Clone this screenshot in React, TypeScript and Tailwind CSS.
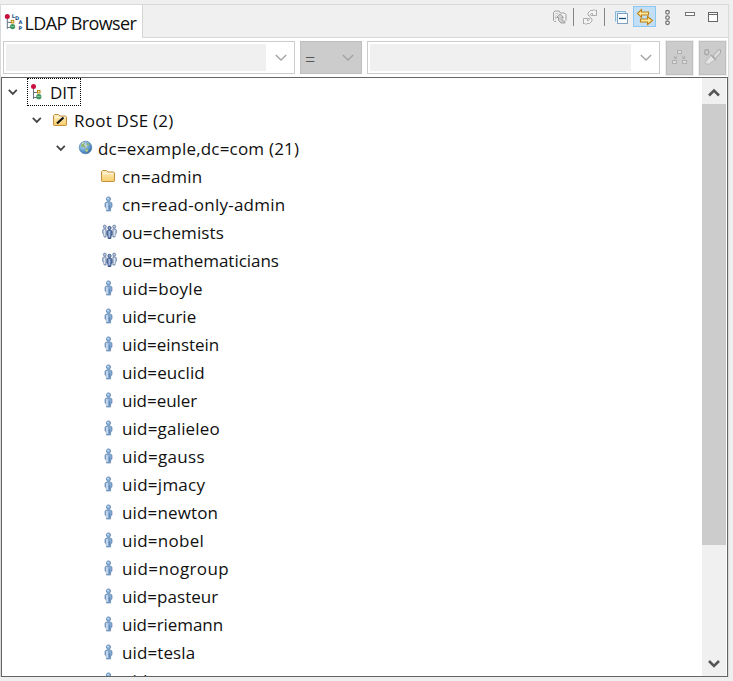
import React from "react";

type IconName = "dit" | "root" | "globe" | "folder" | "person" | "group";
type Row = { label: string; icon: IconName; level: number; track: string };

const rows: Row[] = [
  { label: "DIT", icon: "dit", level: 0, track: "tracking-[-0.1px]" },
  { label: "Root DSE (2)", icon: "root", level: 1, track: "tracking-[0.23px]" },
  { label: "dc=example,dc=com (21)", icon: "globe", level: 2, track: "tracking-[0.2px]" },
  { label: "cn=admin", icon: "folder", level: 3, track: "tracking-[0.22px]" },
  { label: "cn=read-only-admin", icon: "person", level: 3, track: "tracking-[0.22px]" },
  { label: "ou=chemists", icon: "group", level: 3, track: "tracking-[0.1px]" },
  { label: "ou=mathematicians", icon: "group", level: 3, track: "tracking-[-0.04px]" },
  { label: "uid=boyle", icon: "person", level: 3, track: "tracking-[0.33px]" },
  { label: "uid=curie", icon: "person", level: 3, track: "tracking-[0px]" },
  { label: "uid=einstein", icon: "person", level: 3, track: "tracking-[-0.03px]" },
  { label: "uid=euclid", icon: "person", level: 3, track: "tracking-[0.08px]" },
  { label: "uid=euler", icon: "person", level: 3, track: "tracking-[-0.05px]" },
  { label: "uid=galieleo", icon: "person", level: 3, track: "tracking-[0.19px]" },
  { label: "uid=gauss", icon: "person", level: 3, track: "tracking-[0.3px]" },
  { label: "uid=jmacy", icon: "person", level: 3, track: "tracking-[0.25px]" },
  { label: "uid=newton", icon: "person", level: 3, track: "tracking-[0.15px]" },
  { label: "uid=nobel", icon: "person", level: 3, track: "tracking-[0.25px]" },
  { label: "uid=nogroup", icon: "person", level: 3, track: "tracking-[0.4px]" },
  { label: "uid=pasteur", icon: "person", level: 3, track: "tracking-[0.05px]" },
  { label: "uid=riemann", icon: "person", level: 3, track: "tracking-[-0.05px]" },
  { label: "uid=tesla", icon: "person", level: 3, track: "tracking-[0.1px]" },
  { label: "uid=test", icon: "person", level: 3, track: "tracking-[0.1px]" },
];

const indents = ["pl-[4px]", "pl-[28px]", "pl-[52px]", "pl-[76px]"];

function TreeGlyph() {
  return (
    <g>
      <path d="M2.5 4v11M2.5 8.5h4M2.5 13.5h4" stroke="#66727f" fill="none" />
      <circle cx="2.5" cy="2.6" r="2.5" fill="#c8103f" />
      <rect x="6.5" y="6.5" width="2.5" height="2.5" fill="#fff3c4" stroke="#b8860b" />
      <circle cx="7.8" cy="12.7" r="2.6" fill="#3f9560" />
      <path d="M6 12.5h3.5" stroke="#7fc596" />
    </g>
  );
}

function NodeIcon({ name }: { name: IconName }) {
  const common = { width: 16, height: 16, viewBox: "0 0 16 16", fill: "none", className: "shrink-0 overflow-visible" };
  switch (name) {
    case "dit":
      return <svg {...common}><g transform="translate(2 0)"><TreeGlyph /></g></svg>;
    case "root":
    case "folder":
      return (
        <svg {...common}>
          <defs>
            <linearGradient id={"f-" + name} x1="0" y1="0" x2="0" y2="1">
              <stop stopColor="#fff0c4" /><stop offset="1" stopColor="#f9cd6b" />
            </linearGradient>
          </defs>
          <path d="M1.5 13V3.5l1-1h4l1.5 1.5h5.5l1 1V13l-.5.5h-12z" fill={`url(#f-${name})`} stroke="#c58f40" />
          <path d="M2.5 5.5h11" stroke="#fff7dc" />
          {name === "root" && <path d="M5 11.5 11.5 5.5" stroke="#111" strokeWidth="2.2" />}
        </svg>
      );
    case "globe":
      return (
        <svg {...common}>
          <defs>
            <radialGradient id="sea" cx=".35" cy=".3" r=".8">
              <stop stopColor="#d3eafa" /><stop offset=".55" stopColor="#65a2d8" /><stop offset="1" stopColor="#2a5c9b" />
            </radialGradient>
          </defs>
          <g transform="translate(1 0)">
            <circle cx="8.5" cy="7.5" r="6.3" fill="url(#sea)" stroke="#5382ae" strokeWidth=".7" />
            <path d="M4 5 6 2.8 8 3 7 5 9 6 8 8l-2-1-1.5.5zM9 8l2.5 1-1 2.5-1.5 1-1-2.5zM10.5 2.5l2.5 2.5-1.5 1-2-1.5z" fill="#8fb277" />
            <path d="m5 4 1.5-1M8 6.5l2-1M9 10l1.5 1" stroke="#f3e8b0" />
          </g>
        </svg>
      );
    case "person":
      return (
        <svg {...common}>
          <path d="M7 5.8h3l2 1.3v4l-1.2.3-.3 3.6h-4l-.3-3.6L5 11V7.1z" fill="#85aad3" stroke="#5f83ac" strokeWidth=".7" />
          <path d="M7 7v7" stroke="#e0edf9" strokeWidth="1.3" />
          <path d="M9.5 9v5" stroke="#5e86b5" />
          <circle cx="8.5" cy="3" r="2.1" fill="#8cb5df" stroke="#5a81ad" strokeWidth=".8" />
          <path d="M7.3 2.5h1.5" stroke="#d3e8fa" />
        </svg>
      );
    case "group":
      return (
        <svg {...common}>
          <g fill="#b9c8df" stroke="#62779f" strokeWidth=".8">
            <circle cx="4.8" cy="2.6" r="1.5" /><circle cx="14.2" cy="2.6" r="1.5" />
            <path d="M4 4.8 2.7 5.8v3.6l1.1.6.3 3h2V4.8zM15 4.8l1.3 1v3.6l-1.1.6-.3 3h-2V4.8z" />
          </g>
          <path d="M4.7 6v6M14.3 6v6" stroke="#eef4fb" strokeWidth=".8" />
          <path d="M8.5 6h2L12 7.2V11l-.9.3-.3 3.2H8.2l-.3-3.2L7 11V7.2z" fill="#6a86b8" stroke="#2c4878" strokeWidth=".9" />
          <path d="M9.2 7v6" stroke="#c6d6ef" strokeWidth=".9" />
          <circle cx="9.5" cy="3.9" r="1.6" fill="#8aa6d0" stroke="#2c487b" strokeWidth=".9" />
        </svg>
      );
  }
}

function Twisty() {
  return (
    <svg className="shrink-0" width="14" height="14" viewBox="0 0 14 14" fill="none">
      <path d="m2.8 4.9 4 4 4-4" stroke="#444" strokeWidth="1.8" />
    </svg>
  );
}

function Chevron() {
  return (
    <svg width="14" height="10" viewBox="0 0 14 10" fill="none">
      <path d="m1.8 2 5.2 5L12.2 2" stroke="#a3a3a3" strokeWidth="1.3" />
    </svg>
  );
}

function Field({ size }: { size: string }) {
  return (
    <div className={`flex h-[33px] shrink-0 border border-[#cccccc] bg-white p-[2px] ${size}`}>
      <div className="flex-1 bg-[#f0f0f0]" />
      <div className="flex w-[26px] items-center justify-center pl-[4px]"><Chevron /></div>
    </div>
  );
}

function Toolbar() {
  return (
    <svg className="shrink-0" width="186" height="32" viewBox="0 0 186 32" fill="none">
      {/* open folder with upward arrow */}
      <g stroke="#a0a0a0">
        <path d="M14 16.5h-1.5l-1-1v-8l1.5-1.5h4l1.5 2h4l1.5 1.5v6" />
        <path d="M13.5 8.5h3M13.5 14.5V11l1.5-1.5" stroke="#cccccc" />
        <path d="m18 9-3.5 3.5h2v3l2.5 2.5h4v-1.5l-3-1.5v-2.5h1.5z" fill="#d0d0d0" />
      </g>
      <path d="M31.5 3v18M62.5 3v18" stroke="#858585" />
      {/* refresh arrows */}
      <g stroke="#a3a3a3" fill="#f3f3f3" strokeWidth=".9" strokeLinejoin="round">
        <path id="refresh-arrow" d="M47.5 11.5l-1.5-1.5V8l2.5-2.5h2.5l1-1 1.5 1.5 1-1v5.500h-5l1.300-1.500-1-1-1.300 1.500z" />
        <path transform="rotate(180 48 12)" d="M47.500 11.500l-1.500-1.500V8l2.500-2.500h2.500l1-1 1.500 1.500 1-1v5.500h-5l1.300-1.500-1-1-1.300 1.500z" />
      </g>
      {/* collapse all */}
      <path d="M73.5 16.5v-10h10v2" fill="#d9effa" stroke="#85b8d9" />
      <rect x="75.5" y="8.5" width="10" height="10" fill="#fcffff" stroke="#7da0bf" />
      <path d="M77 13.5h7" stroke="#0b4a77" strokeWidth="1.3" />
      {/* link with editor */}
      <rect x="91.5" y="1.5" width="22" height="20" fill="#c2dff5" stroke="#8cc6f3" />
      <g fill="#ffe7a1" stroke="#bd8213" strokeWidth="1.1">
        <path d="m95.5 8.5 4-4V7h7v3h-7v2.5z" />
        <path d="M98.5 14h7v-2.5l5 4-5 4V17h-7z" />
      </g>
      <g stroke="#777" strokeWidth="1.3" fill="#fff">
        <circle cx="125.5" cy="7.3" r="1.8" /><circle cx="125.5" cy="12.6" r="1.8" /><circle cx="125.5" cy="17.8" r="1.8" />
      </g>
      <rect x="143.5" y="7.5" width="9" height="3" fill="#fff" stroke="#727272" />
      <rect x="166.5" y="7.5" width="9" height="9" fill="#fff" stroke="#656565" />
      <path d="M166 9.5h10" stroke="#656565" />
    </svg>
  );
}

export default function App() {
  return (
    <main className="h-[681px] w-[733px] overflow-hidden bg-[#efefef] pt-[4px] font-['Open_Sans','Noto_Sans',sans-serif] text-[#101010]">
      <section className="flex h-[673px] w-[729px] flex-col border border-b-0 border-[#dadada] bg-white">
        <header className="flex h-[33px] shrink-0">
          <div className="flex w-[142px] shrink-0 items-start border-r border-[#d5d5d5] bg-white pl-[4px]">
            <svg width="18" height="18" viewBox="0 0 18 18" fill="none" className="mt-[8px] mr-[1.5px] shrink-0 overflow-visible">
              <g transform="translate(-0.2 .9)"><TreeGlyph /></g>
              <g className="font-['DejaVu_Sans',sans-serif] text-[5px] font-bold" fill="#144f88">
                <text x="6.8" y="4.8">L</text><text x="10" y="7">D</text><text x="13.4" y="11.2">A</text><text x="13.4" y="16.8">P</text>
              </g>
            </svg>
            <h1 className="mt-[6px] text-[18px] leading-[24px] whitespace-nowrap tracking-[-0.62px]">LDAP Browser</h1>
          </div>
          <div className="flex flex-1 justify-end border-b border-[#d8d8d8] bg-[#f0f0f0]"><Toolbar /></div>
        </header>

        <div className="flex h-[39px] shrink-0 pl-[2px] pt-[3px]">
          <Field size="w-[292px]" />
          <div className="ml-[5px] flex h-[33px] w-[62px] shrink-0 items-center justify-between border border-[#bfbfbf] bg-[#cccccc] pr-[6px] pl-[4px]">
            <span className="pt-[4px] text-[18px] font-light text-[#555]">=</span><Chevron />
          </div>
          <div className="ml-[5px] flex"><Field size="w-[293px]" /></div>
          <div className="ml-[6px] flex h-[34px] w-[27px] items-center justify-center border border-[#c0c0c0] bg-[#cccccc] shadow-[0_0_0_1px_#eeeeee]">
            <svg width="17" height="18" viewBox="0 0 17 18" fill="none" stroke="#b0b0b0">
              <rect x="6.5" y="1.5" width="4" height="3" fill="#ddd" /><rect x="1.5" y="11.5" width="4" height="3" fill="#ddd" /><rect x="11.5" y="11.5" width="4" height="3" fill="#ddd" />
              <path d="m6.5 6.5-3 3M3.5 7v2.5H6M10.500 6.500l3 3M13.500 7v2.500H11" />
            </svg>
          </div>
          <div className="ml-[6px] flex h-[34px] w-[27px] items-center justify-center border border-[#c0c0c0] bg-[#cccccc] shadow-[0_0_0_1px_#eeeeee]">
            <svg width="21" height="20" viewBox="0 0 21 20" fill="none">
              <rect x="2.7" y="1.7" width="4" height="5" rx="1.6" stroke="#aaa" strokeWidth="1.4" />
              <path d="m3 14.5 4-5 2-2.5 4.5 4.5-3 2-3 2.5H4z" fill="#e4e4e4" stroke="#b8b8b8" />
              <path d="m11 8 5-6 2.5-.5V5l-5 5.5z" fill="#dadada" stroke="#aaa" />
              <path d="m9 7 5 5" stroke="#a8a8a8" strokeWidth="1.5" />
            </svg>
          </div>
        </div>

        <div className="flex h-[600px] w-[727px] shrink-0 border border-[#646464] bg-white">
          <ul className="flex-1 overflow-hidden">
            {rows.map((row) => (
              <li key={row.label} className={`flex h-[28px] items-center ${indents[row.level]}`}>
                {row.level < 3 ? <Twisty /> : <span className="w-[14px] shrink-0" />}
                <span className={row.level === 0 ? "ml-[7px] flex h-[28px] w-[54px] shrink-0 items-center border border-dotted border-black pl-px" : "ml-[8px] flex h-[28px] items-center"}>
                  <NodeIcon name={row.icon} />
                  <span className={`${row.level === 0 ? "ml-[5px]" : "ml-[6px]"} pt-px whitespace-nowrap text-[17px] leading-[26px] ${row.track}`}>{row.label}</span>
                </span>
              </li>
            ))}
          </ul>
          <div className="mr-px flex w-[24px] flex-col items-center bg-[#f0f0f0]">
            <div className="flex h-[26px] shrink-0 items-center justify-center pt-[3px]">
              <svg width="14" height="12" viewBox="0 0 14 12" fill="none"><path d="m2 8.5 5-5 5 5" stroke="#555" strokeWidth="2.5" /></svg>
            </div>
            <div className="h-[441px] w-full bg-[#cccccc]" />
            <div className="mt-auto flex h-[26px] items-center justify-center pt-px">
              <svg width="14" height="12" viewBox="0 0 14 12" fill="none"><path d="m2 3 5 5 5-5" stroke="#555" strokeWidth="2.5" /></svg>
            </div>
          </div>
        </div>
      </section>
    </main>
  );
}
